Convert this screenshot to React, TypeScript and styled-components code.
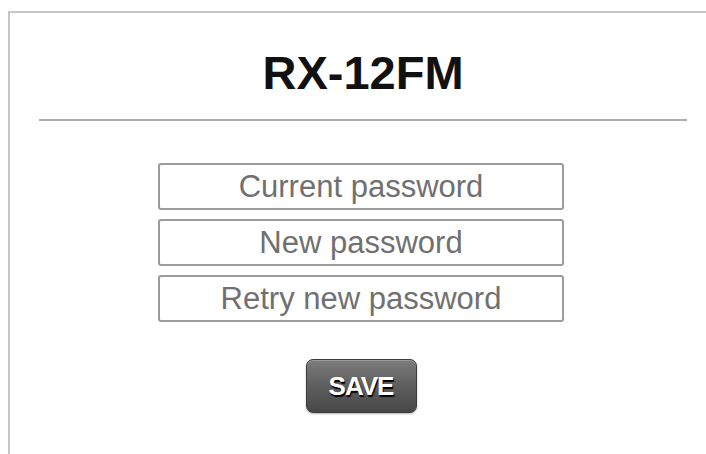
import React from "react";
import styled, { createGlobalStyle } from "styled-components";

const GlobalStyle = createGlobalStyle`
  html, body {
    margin: 0;
    padding: 0;
    background: #ffffff;
    overflow: hidden;
  }
  body {
    font-family: "Liberation Sans", Arial, sans-serif;
  }
`;

const Page = styled.div`
  padding: 11px 0 0 8px;
  height: 454px;
  box-sizing: border-box;
`;

const Panel = styled.section`
  width: 708px;
  height: 100%;
  box-sizing: border-box;
  border-top: 2px solid #c6c6c6;
  border-left: 2px solid #c6c6c6;
  padding: 37px 29px 0 29px;
  display: flex;
  flex-direction: column;
`;

const Title = styled.h1`
  margin: 0;
  font-family: "Liberation Sans", Arial, sans-serif;
  font-weight: 700;
  font-size: 47px;
  line-height: 46px;
  color: #111111;
  text-align: center;
`;

const Divider = styled.hr`
  margin: 23px 0 0 0;
  border: none;
  height: 2px;
  background: #acacac;
`;

const Form = styled.form`
  margin-top: 42px;
  padding-right: 4px;
  display: flex;
  flex-direction: column;
  align-items: center;
  gap: 9px;
`;

const Field = styled.input`
  width: 406px;
  height: 47px;
  box-sizing: border-box;
  border: 2px solid #9c9c9c;
  border-radius: 3px;
  background: #ffffff;
  padding: 0 8px;
  font-family: "Liberation Sans", Arial, sans-serif;
  font-size: 31px;
  text-align: center;
  color: #333333;
  outline: none;

  &::placeholder {
    color: #707070;
    opacity: 1;
  }
`;

const SaveButton = styled.button`
  margin-top: 28px;
  width: 111px;
  height: 54px;
  box-sizing: border-box;
  border: 1px solid #3c3c3c;
  border-radius: 7px;
  background: linear-gradient(to bottom, #7c7c7c 0%, #5e5e5e 50%, #474747 100%);
  box-shadow: inset 0 1px 0 rgba(255, 255, 255, 0.25), 0 1px 2px rgba(0, 0, 0, 0.3);
  color: #ffffff;
  font-family: "Liberation Sans", Arial, sans-serif;
  font-weight: 700;
  font-size: 26px;
  letter-spacing: -1px;
  text-shadow: 1px 2px 1px #000000;
  cursor: pointer;
  padding: 0;
`;

export default function App() {
  return (
    <>
      <GlobalStyle />
      <Page>
        <Panel>
          <Title>RX-12FM</Title>
          <Divider />
          <Form onSubmit={(e) => e.preventDefault()}>
            <Field type="password" placeholder="Current password" />
            <Field type="password" placeholder="New password" />
            <Field type="password" placeholder="Retry new password" />
            <SaveButton type="submit">SAVE</SaveButton>
          </Form>
        </Panel>
      </Page>
    </>
  );
}
